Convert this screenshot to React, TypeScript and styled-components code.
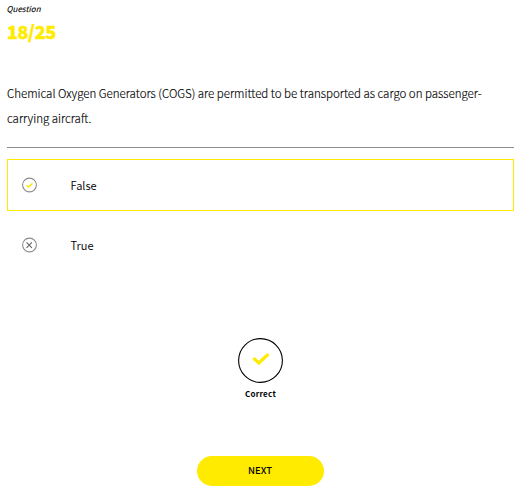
import React from "react";
import styled, { createGlobalStyle } from "styled-components";

const YELLOW = "#ffeb00";

const GlobalStyle = createGlobalStyle`
  *, *::before, *::after { box-sizing: border-box; }
  body {
    margin: 0;
    background: #fff;
    color: #000;
    font-family: "Noto Sans CJK SC", "Open Sans", sans-serif;
  }
`;

const Page = styled.main`
  display: flex;
  flex-direction: column;
  width: 520px;
  height: 502px;
  padding: 2px 6px 0 7px;
  overflow: hidden;
`;

const Label = styled.div`
  height: 14px;
  margin-left: -0.5px;
  font-size: 8px;
  line-height: 14px;
  font-style: italic;
  font-weight: 400;
  letter-spacing: 0.05px;
  -webkit-text-stroke: 0.1px #000;
`;

const Counter = styled.div`
  height: 30px;
  color: ${YELLOW};
  font-size: 18px;
  line-height: 30px;
  font-weight: 900;
  letter-spacing: -0.4px;
  -webkit-text-stroke: 0.4px ${YELLOW};
`;

const Prompt = styled.p`
  height: 67px;
  margin: 35px 0 0;
  border-bottom: 1px solid #8c8c8c;
  font-size: 11.5px;
  line-height: 25px;
  font-weight: 300;
  -webkit-text-stroke: 0.15px #000;
  white-space: nowrap;
`;

const Answers = styled.ul`
  display: flex;
  flex-direction: column;
  gap: 8px;
  margin: 11px 0 0;
  padding: 0;
  list-style: none;
`;

const Answer = styled.li<{ $selected?: boolean }>`
  display: flex;
  align-items: center;
  gap: 33.5px;
  height: 52px;
  padding-left: 14px;
  border: 1px solid ${({ $selected }) => ($selected ? YELLOW : "transparent")};
  font-size: 11.1px;
  line-height: 20px;
  font-weight: 350;
`;

const AnswerIcon = styled.svg`
  flex: none;
  width: 15px;
  height: 16px;
`;

const Result = styled.section`
  display: flex;
  flex-direction: column;
  align-items: center;
  margin-top: 67px;
`;

const ResultIcon = styled.svg`
  width: 45px;
  height: 45px;
`;

const ResultText = styled.div`
  margin-top: 3px;
  font-size: 8px;
  line-height: 16px;
  font-weight: 700;
  letter-spacing: 0.25px;
`;

const NextButton = styled.button`
  align-self: center;
  width: 127px;
  height: 30px;
  margin-top: 54px;
  padding: 0 1px 1px 0;
  border: 0;
  border-radius: 15px;
  background: ${YELLOW};
  color: #000;
  font-family: inherit;
  font-size: 9.5px;
  line-height: 29px;
  font-weight: 500;
`;

export default function App() {
  return (
    <>
      <GlobalStyle />
      <Page>
        <Label>Question</Label>
        <Counter>18/25</Counter>
        <Prompt>
          Chemical Oxygen Generators (COGS) are permitted to be transported as cargo on passenger-
          <br />
          carrying aircraft.
        </Prompt>
        <Answers>
          <Answer $selected>
            <AnswerIcon viewBox="0 0 15 16" fill="none">
              <circle cx="7.5" cy="8" r="6.9" stroke="#8c8c8c" strokeWidth="1.1" />
              <path d="m4.6 8.2 2 1.8 3.9-3.8" stroke={YELLOW} strokeWidth="1.5" />
            </AnswerIcon>
            <span>False</span>
          </Answer>
          <Answer>
            <AnswerIcon viewBox="0 0 15 16" fill="none">
              <circle cx="7.5" cy="8" r="6.9" stroke="#8c8c8c" strokeWidth="1.1" />
              <path d="m4.5 5.4 5.4 5.4m0-5.4-5.4 5.4" stroke="#666" strokeWidth="1.1" />
            </AnswerIcon>
            <span>True</span>
          </Answer>
        </Answers>
        <Result>
          <ResultIcon viewBox="0 0 45 45" fill="none">
            <circle cx="22.5" cy="22.5" r="21.9" stroke="#000" strokeWidth="1.1" />
            <path d="m16.4 21 4.4 4 8.6-8" stroke={YELLOW} strokeWidth="3.2" strokeLinecap="round" />
          </ResultIcon>
          <ResultText>Correct</ResultText>
        </Result>
        <NextButton type="button">NEXT</NextButton>
      </Page>
    </>
  );
}
